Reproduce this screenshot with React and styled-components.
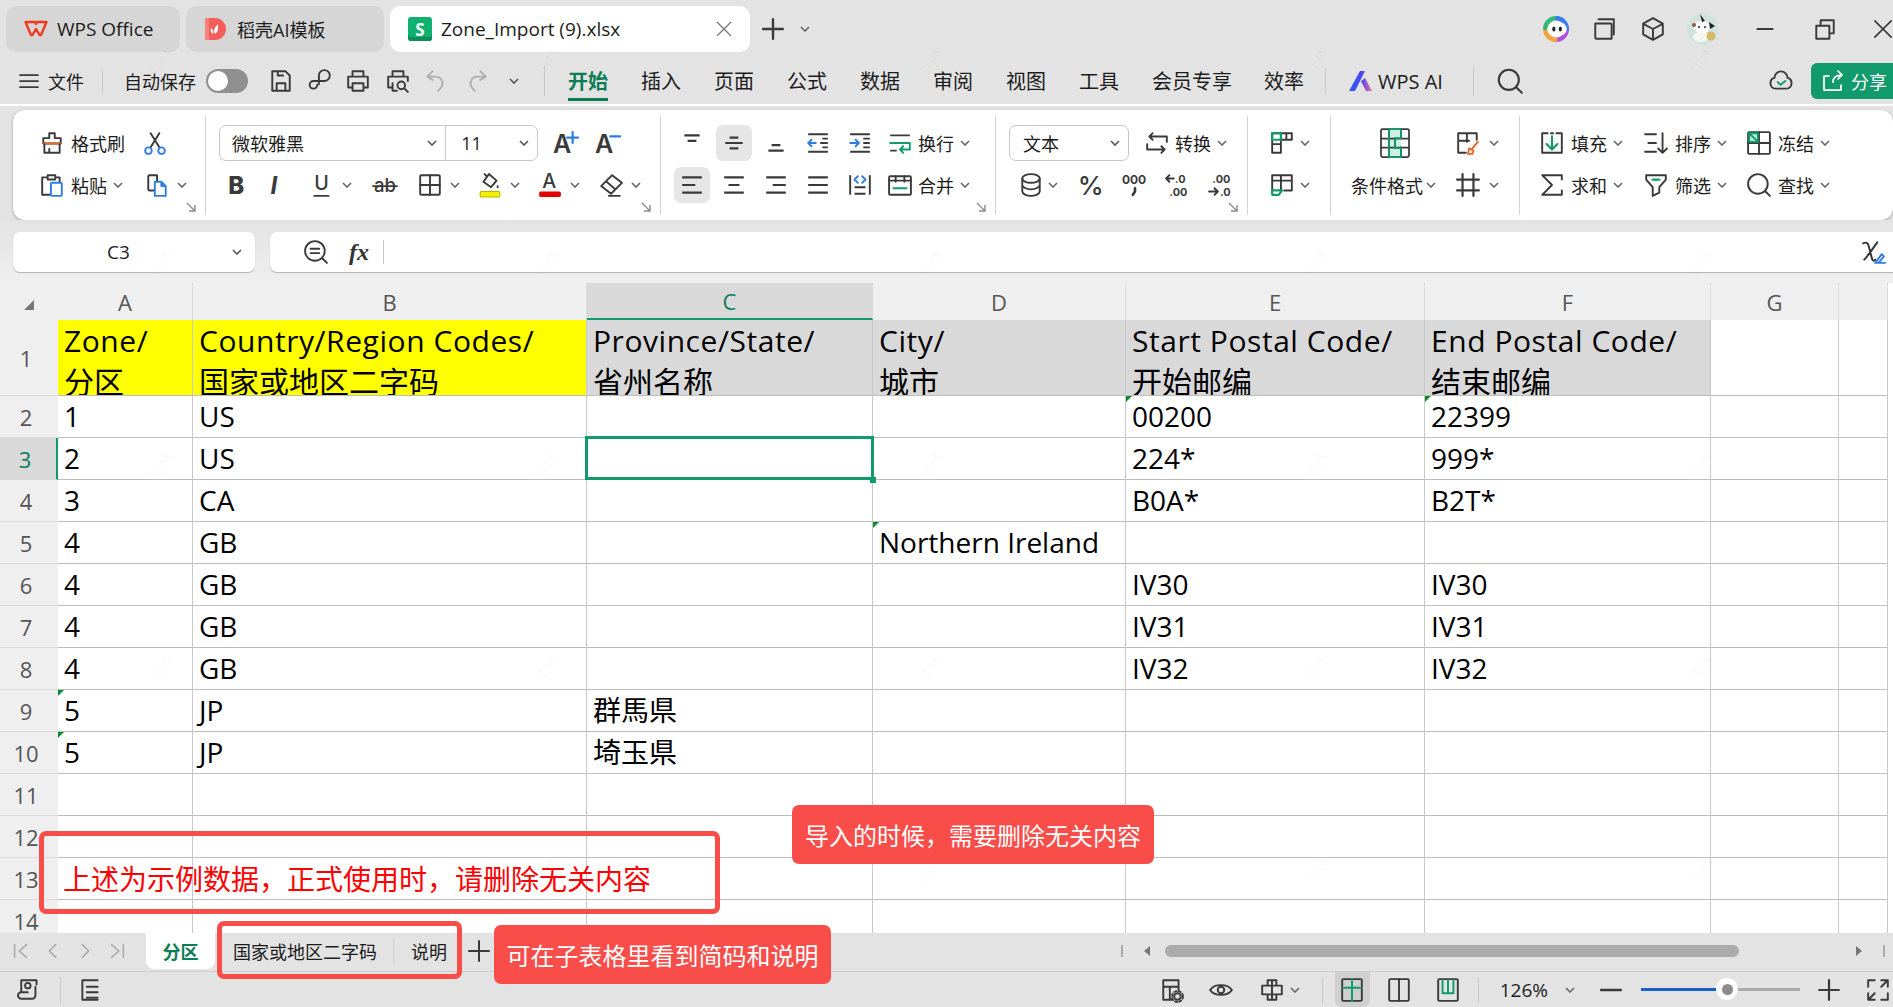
import React from 'react';
import styled, { createGlobalStyle } from 'styled-components';

const INK = '#3a3a3a';
const BLUE = '#2f7de1';
const GREEN = '#119a6c';
const ANNOT = '#f94d4a';

const GlobalStyle = createGlobalStyle`
    html, body { margin: 0; padding: 0; background: #fff; }
    body { font-family: "Open Sans", "Noto Sans CJK SC", sans-serif; color: #1c1c1c; overflow: hidden; }
    * { box-sizing: border-box; }
`;

const Page = styled.div`
    position: relative;
    width: 1893px;
    height: 1007px;
    overflow: hidden;
    display: flex;
    flex-direction: column;
`;

const Svg = styled.svg`
    flex: none;
    width: ${p => p.$size || 24}px;
    height: ${p => p.$size || 24}px;
    margin-left: ${p => p.$ml || 0}px;
    overflow: visible;
    fill: none;
    stroke: ${INK};
    stroke-width: 1.75;
    stroke-linecap: round;
    stroke-linejoin: round;
    text { stroke: none; fill: ${INK}; font-family: "Inter", sans-serif; font-weight: 600; }
`;

const Icon = ({ children, size, ml }) => (
    <Svg viewBox="1 1 22 22" $size={size} $ml={ml}>{children}</Svg>
);

const Chev = styled.svg.attrs({ viewBox: '0 0 10 6', children: <path d="M1 1l4 4 4-4" /> })`
    flex: none;
    width: 10px;
    height: 6px;
    margin-left: ${p => (p.$ml === undefined ? 6 : p.$ml)}px;
    fill: none;
    stroke: ${p => p.$color || '#666'};
    stroke-width: 1.6;
`;

/* ---- title bar ---- */
const TitleBar = styled.div`
    height: 58px;
    background: #e3e3e3;
    padding: 6px 0 6px 6px;
    display: flex;
    align-items: stretch;
    gap: 6px;
`;

const DocTab = styled.div`
    width: ${p => p.$w}px;
    background: ${p => (p.$active ? '#fff' : '#d6d6d6')};
    border-radius: 10px;
    display: flex;
    align-items: center;
    gap: 9px;
    padding: 0 18px;
    font-size: ${p => p.$fs || 19}px;
`;

const TabClose = styled.span`
    margin-left: auto;
    display: flex;
`;

const TitleRight = styled.div`
    margin-left: auto;
    display: flex;
    align-items: center;
`;

const NewTab = styled.div`
    display: flex;
    align-items: center;
    margin-left: 5px;
`;

/* ---- menu bar ---- */
const MenuBar = styled.div`
    height: 46px;
    background: #e3e3e3;
    display: flex;
    align-items: center;
    padding: 0 0 0 18px;
`;

const MenuText = styled.span`
    font-size: ${p => p.$fs || 18}px;
    margin-left: ${p => p.$ml || 0}px;
    white-space: nowrap;
`;

const VSep = styled.span`
    flex: none;
    width: 1px;
    height: ${p => p.$h || 26}px;
    margin-left: ${p => p.$ml || 0}px;
    background: #c8c8c8;
`;

const Toggle = styled.span`
    flex: none;
    width: 42px;
    height: 24px;
    margin-left: 10px;
    border-radius: 12px;
    background: #8f8f8f;
    padding: 2px;
    &::before {
        content: '';
        display: block;
        width: 20px;
        height: 20px;
        border-radius: 50%;
        background: #fff;
    }
`;

const MenuTab = styled.span`
    position: relative;
    flex: none;
    font-size: 20px;
    line-height: 46px;
    padding-top: 1px;
    margin-left: ${p => p.$ml ?? 33}px;
    font-weight: ${p => (p.$active ? 700 : 400)};
    color: ${p => (p.$active ? '#0b7d55' : '#1c1c1c')};
    &::after {
        content: ${p => (p.$active ? "''" : 'none')};
        position: absolute;
        left: 0;
        right: 0;
        bottom: 4px;
        height: 3px;
        background: #0b7d55;
    }
`;

const ShareButton = styled.div`
    width: 82px;
    height: 36px;
    margin-left: 18px;
    border-radius: 6px 0 0 6px;
    background: ${GREEN};
    color: #fff;
    font-size: 18px;
    display: flex;
    align-items: center;
    gap: 7px;
    padding-left: 11px;
    svg { stroke: #fff; }
`;

/* ---- ribbon ---- */
const RibbonWrap = styled.div`
    background: #e3e3e3;
    padding: 4px 0 0 13px;
    height: 114px;
    flex: none;
    margin-top: 2px;
`;

const Ribbon = styled.div`
    height: 110px;
    background: #fff;
    border-radius: 12px;
    box-shadow: 0 1px 3px rgba(0, 0, 0, 0.3);
    padding: 6px 0 5px;
    display: flex;
`;

const Group = styled.div`
    position: relative;
    flex: ${p => (p.$w ? 'none' : 1)};
    width: ${p => p.$w}px;
    border-right: ${p => (p.$w ? '1px solid #d4d4d4' : 'none')};
    padding: 9px 0 0 ${p => p.$pl}px;
    display: flex;
    flex-direction: ${p => p.$dir || 'column'};
    gap: 6px;
`;

const Row = styled.div`
    height: 36px;
    display: flex;
    align-items: center;
    padding-left: ${p => p.$pl || 0}px;
`;

const Tool = styled.div`
    flex: none;
    display: flex;
    align-items: center;
    width: ${p => (p.$w ? `${p.$w}px` : 'auto')};
    font-size: 18px;
    white-space: nowrap;
`;

const Label = styled.span`
    margin-left: ${p => p.$ml ?? 7}px;
`;

const Launcher = styled.svg.attrs({ viewBox: '0 0 10 10', children: <path d="M1 1l7.5 7.5M9 3v6H3" /> })`
    position: absolute;
    right: 9px;
    bottom: 3px;
    width: 10px;
    height: 10px;
    fill: none;
    stroke: #8a8a8a;
    stroke-width: 1.4;
`;

const SelectBox = styled.div`
    flex: none;
    width: ${p => p.$w}px;
    height: 36px;
    border: 1px solid #c6c6c6;
    border-radius: 7px;
    display: flex;
    align-items: center;
    font-size: 18px;
`;

const SelectPart = styled.div`
    display: flex;
    align-items: center;
    height: 100%;
    width: ${p => p.$w}px;
    padding: 0 ${p => p.$pr || 8}px 0 ${p => p.$pl || 12}px;
    border-right: ${p => (p.$split ? '1px solid #c6c6c6' : 'none')};
    justify-content: space-between;
`;

const AlignButton = styled.div`
    flex: none;
    width: 36px;
    height: 36px;
    margin-right: 6px;
    border-radius: 7px;
    background: ${p => (p.$on ? '#e6e6e6' : 'transparent')};
    display: flex;
    align-items: center;
    justify-content: center;
`;

const ColumnTool = styled.div`
    width: 105px;
    display: flex;
    flex-direction: column;
    font-size: 18px;
    white-space: nowrap;
`;

const BigIconSlot = styled.div`
    height: 36px;
    display: flex;
    justify-content: center;
    padding-right: 17px;
    align-items: center;
`;

const LabelRow = styled.div`
    height: 36px;
    margin-top: 6px;
    display: flex;
    align-items: center;
`;

/* ---- formula bar ---- */
const FormulaRow = styled.div`
    flex: none;
    height: 63px;
    padding: 12px 0 11px 13px;
    display: flex;
    gap: 15px;
    background: linear-gradient(#e3e3e3, #efefef);
`;

const NameBox = styled.div`
    width: 242px;
    background: #fff;
    border-radius: 7px;
    box-shadow: 0 1px 1px rgba(0, 0, 0, 0.25);
    display: flex;
    align-items: center;
    font-size: 19px;
    padding-left: 94px;
`;

const FormulaInput = styled.div`
    flex: 1;
    background: #fff;
    border-radius: 7px 0 0 7px;
    box-shadow: 0 1px 1px rgba(0, 0, 0, 0.25);
    display: flex;
    align-items: center;
    padding-left: 34px;
`;

const FxText = styled.span`
    font-family: "Liberation Serif", serif;
    font-style: italic;
    font-weight: 700;
    font-size: 24px;
    margin-left: 21px;
    color: #333;
`;

const FormulaEnd = styled.span`
    margin-left: auto;
    margin-right: 8px;
    display: flex;
`;

/* ---- sheet grid ---- */
const Sheet = styled.div`
    flex: none;
    height: 650px;
    overflow: hidden;
    display: grid;
    width: 1888px;
    grid-template-columns: 58px 135px 394px 286px 253px 299px 286px 128px 49px;
    grid-template-rows: 37px 76px repeat(14, 42px);
`;

const Corner = styled.div`
    background: #efefef;
    display: flex;
    align-items: center;
    justify-content: center;
    padding: 6px 0 0 0;
    &::before {
        content: '';
        border-style: solid;
        border-width: 0 0 10px 10px;
        border-color: transparent transparent #777 transparent;
    }
`;

const ColHead = styled.div`
    background: ${p => (p.$on ? '#d9d9d9' : '#efefef')};
    color: ${p => (p.$on ? '#0b7d55' : '#555')};
    border-right: 1px solid ${p => (p.$on ? '#d9d9d9' : '#dcdcdc')};
    border-bottom: ${p => (p.$on ? `2px solid ${GREEN}` : 'none')};
    display: flex;
    align-items: center;
    justify-content: center;
    font-size: 22px;
`;

const RowHead = styled.div`
    background: ${p => (p.$on ? '#d9d9d9' : '#efefef')};
    color: ${p => (p.$on ? '#0b7d55' : '#555')};
    border-bottom: 1px solid ${p => (p.$on ? '#d9d9d9' : '#dcdcdc')};
    border-right: ${p => (p.$on ? `2px solid ${GREEN}` : 'none')};
    display: flex;
    align-items: center;
    justify-content: center;
    padding-right: 6px;
    font-size: 22px;
`;

const Cell = styled.div`
    position: relative;
    background: ${p => p.$bg || '#fff'};
    border-right: 1px solid #c8c8c8;
    border-bottom: 1px solid #bdbdbd;
    padding-left: 6px;
    font-size: ${p => (p.$head ? 30 : 28)}px;
    line-height: 41px;
    color: #000;
    white-space: pre;
    overflow: ${p => (p.$sel ? 'visible' : 'hidden')};
    &::before {
        content: ${p => (p.$flag ? "''" : 'none')};
        position: absolute;
        left: 0;
        top: 0;
        border-style: solid;
        border-width: 6px 6px 0 0;
        border-color: #0b8a2e transparent transparent transparent;
    }
    &::after {
        content: ${p => (p.$sel ? "''" : 'none')};
        position: absolute;
        inset: -2px -2px -1px -2px;
        border: 3px solid ${GREEN};
        z-index: 2;
    }
`;

const HeadLatin = styled.span`
    letter-spacing: 0.55px;
`;

const FillHandle = styled.span`
    position: absolute;
    right: -4px;
    bottom: -4px;
    width: 6px;
    height: 6px;
    background: ${GREEN};
    z-index: 3;
`;

/* ---- sheet tabs ---- */
const SheetBar = styled.div`
    flex: none;
    height: 38px;
    background: #e3e3e3;
    display: flex;
    align-items: flex-start;
    padding-left: 11px;
`;

const NavSlot = styled.div`
    width: 32px;
    height: 36px;
    display: flex;
    align-items: center;
`;

const ActiveSheet = styled.div`
    width: 69px;
    height: 36px;
    margin-left: 7px;
    background: #fff;
    border-radius: 0 0 8px 8px;
    color: #0b7d55;
    font-weight: 700;
    font-size: 18px;
    display: flex;
    align-items: center;
    justify-content: center;
`;

const SheetName = styled.div`
    height: 36px;
    font-size: 18px;
    margin-left: ${p => p.$ml}px;
    display: flex;
    align-items: center;
`;

const SheetSep = styled.span`
    width: 1px;
    height: 26px;
    margin: 5px 0 0 16px;
    background: #cfcfcf;
`;

const HScroll = styled.div`
    margin-left: auto;
    width: 772px;
    height: 36px;
    padding-right: 8px;
    display: flex;
    align-items: center;
`;

const ScrollTick = styled.span`
    width: 2px;
    height: 12px;
    background: #aaa;
`;

const ScrollThumb = styled.span`
    width: 574px;
    height: 12px;
    margin-left: 15px;
    border-radius: 6px;
    background: #ababab;
`;

const ScrollArrow = styled.span`
    margin: ${p => p.$m};
    border-style: solid;
    border-width: 5px ${p => (p.$right ? 0 : '6px')} 5px ${p => (p.$right ? '6px' : 0)};
    border-color: transparent ${p => (p.$right ? 'transparent' : '#777')} transparent ${p => (p.$right ? '#777' : 'transparent')};
`;

/* ---- status bar ---- */
const StatusBar = styled.div`
    flex: none;
    height: 36px;
    background: #e3e3e3;
    border-top: 1px solid #cdcdcd;
    display: flex;
    align-items: center;
    padding: 0 3px 0 18px;
`;

const StatusRight = styled.div`
    margin-left: auto;
    display: flex;
    align-items: center;
    height: 100%;
`;

const ViewButton = styled.div`
    flex: none;
    width: 35px;
    height: 100%;
    margin-left: ${p => p.$ml || 0}px;
    border-radius: 0 0 7px 7px;
    background: ${p => (p.$on ? '#cfcfcf' : 'transparent')};
    display: flex;
    align-items: center;
    justify-content: center;
`;

const ZoomSlider = styled.div`
    position: relative;
    flex: none;
    width: 159px;
    height: 3px;
    margin-left: 18px;
    background: #aaa;
`;

const ZoomFill = styled.div`
    height: 100%;
    background: #1a5fc4;
`;

const ZoomKnob = styled.span`
    position: absolute;
    left: 75px;
    top: -10px;
    width: 22px;
    height: 22px;
    border-radius: 50%;
    background: #fff;
    display: flex;
    align-items: center;
    justify-content: center;
    &::before {
        content: '';
        width: 11px;
        height: 11px;
        border-radius: 50%;
        background: #8c8c8c;
    }
`;

/* ---- red annotations over the sheet ---- */
const AnnotBox = styled.div`
    position: absolute;
    left: ${p => p.$x}px;
    top: ${p => p.$y}px;
    width: ${p => p.$w}px;
    height: ${p => p.$h}px;
    border: 5px solid ${ANNOT};
    border-radius: 7px;
    z-index: 5;
`;

const AnnotText = styled.span`
    position: absolute;
    left: 19px;
    top: 22px;
    font-family: "Noto Sans CJK SC", sans-serif;
    font-size: 28px;
    line-height: 40px;
    color: #ff0000;
    white-space: nowrap;
`;

const AnnotTag = styled.div`
    position: absolute;
    left: ${p => p.$x}px;
    top: ${p => p.$y}px;
    width: ${p => p.$w}px;
    height: 59px;
    border-radius: 7px;
    background: ${ANNOT};
    color: #fff;
    font-family: "Noto Sans CJK SC", sans-serif;
    font-size: 24px;
    display: flex;
    align-items: center;
    justify-content: center;
    white-space: nowrap;
    z-index: 5;
`;

const Watermarks = styled.div`
    position: absolute;
    inset: 0;
    pointer-events: none;
    display: grid;
    grid-template-columns: repeat(5, 385px);
    grid-auto-rows: 202.5px;
    padding: 40px 0 0 150px;
    z-index: 4;
`;

const Watermark = styled.span`
    width: 44px;
    height: 40px;
    font-size: 15px;
    color: rgba(0, 0, 0, 0.03);
    transform: rotate(-58deg);
`;

/* ---- drawings ---- */
const alignLines = {
    top: 'M5 5h14M8 10h8',
    middle: 'M8 7h8M4 12h16M8 17h8',
    bottom: 'M8 14h8M5 19h14',
};

const TabS = styled.span`
    width: 24px;
    height: 24px;
    border-radius: 3px;
    background: #0fb170;
    color: #fff;
    font-weight: 700;
    font-size: 17px;
    display: flex;
    align-items: center;
    justify-content: center;
    box-shadow: inset 0 -4px 0 #0a8f58;
`;

const Lines = ({ d }) => <Icon><path d={d} strokeWidth="2" strokeLinecap="butt" /></Icon>;

const ToolChev = ({ w, children, ml }) => (
    <Tool $w={w}>{children}<Chev $ml={ml === undefined ? 8 : ml} /></Tool>
);

const cols = ['A', 'B', 'C', 'D', 'E', 'F', 'G', ''];

const rows = [
    { n: 2, a: '1', b: 'US', e: '00200', f: '22399', flags: 'ef' },
    { n: 3, a: '2', b: 'US', e: '224*', f: '999*', on: true },
    { n: 4, a: '3', b: 'CA', e: 'B0A*', f: 'B2T*' },
    { n: 5, a: '4', b: 'GB', d: 'Northern Ireland', flags: 'd' },
    { n: 6, a: '4', b: 'GB', e: 'IV30', f: 'IV30' },
    { n: 7, a: '4', b: 'GB', e: 'IV31', f: 'IV31' },
    { n: 8, a: '4', b: 'GB', e: 'IV32', f: 'IV32' },
    { n: 9, a: '5', b: 'JP', c: '群馬県', flags: 'a' },
    { n: 10, a: '5', b: 'JP', c: '埼玉県', flags: 'a' },
    { n: 11 }, { n: 12 }, { n: 13 }, { n: 14 },
];

const headRow = [
    ['Zone/', '分区', '#ffff00'],
    ['Country/Region Codes/', '国家或地区二字码', '#ffff00'],
    ['Province/State/', '省州名称', '#d9d9d9'],
    ['City/', '城市', '#d9d9d9'],
    ['Start Postal Code/', '开始邮编', '#d9d9d9'],
    ['End Postal Code/', '结束邮编', '#d9d9d9'],
    ['', '', '#fff'],
    ['', '', '#fff'],
];

function App() {
    return (
        <Page>
            <GlobalStyle />
            <TitleBar>
                <DocTab $w={174}>
                    <Svg viewBox="0 0 24 24">
                        <path d="M1.500 5H11l1 2 1-2h9.500L17 18h-1.500L12 12l-3.500 6H7z" stroke="#f4381f" strokeWidth="2.400" />
                    </Svg>
                    WPS Office
                </DocTab>
                <DocTab $w={198} $fs={18}>
                    <Svg viewBox="0 0 24 24" style={{ stroke: 'none' }}>
                        <path d="M1 1h10a11 11 0 0 1 0 22H1z" fill="#f55d5a" />
                        <path d="M1 1h4v22H1z" fill="#f7827e" />
                        <path d="M11 17c-2-3-1-6 3-10 0 4 1 7-3 10zM9 17c-2-1-3-3-2-6 2 2 3 3 2 6z" fill="#fff" />
                    </Svg>
                    稻壳AI模板
                </DocTab>
                <DocTab $w={360} $active>
                    <TabS>S</TabS>
                    Zone_Import (9).xlsx
                    <TabClose>
                        <Icon size={16}><path d="M3 3l18 18M21 3L3 21" stroke="#777" /></Icon>
                    </TabClose>
                </DocTab>
                <NewTab>
                    <Icon><path d="M12 3v18M3 12h18" strokeWidth="2.200" /></Icon>
                    <Chev $ml={15} />
                </NewTab>
                <TitleRight>
                    <Svg viewBox="0 0 24 24" $size={26}>
                        <circle cx="12" cy="12" r="10" strokeWidth="4" stroke="#b04ae0" strokeDasharray="16 50" />
                        <circle cx="12" cy="12" r="10" strokeWidth="4" stroke="#f2a33a" strokeDasharray="16 50" strokeDashoffset="-16" />
                        <circle cx="12" cy="12" r="10" strokeWidth="4" stroke="#33b87a" strokeDasharray="16 50" strokeDashoffset="-32" />
                        <circle cx="12" cy="12" r="10" strokeWidth="4" stroke="#3a7df0" strokeDasharray="16 50" strokeDashoffset="-48" />
                        <ellipse cx="13" cy="12" rx="9" ry="7" fill="#fff" stroke="none" />
                        <ellipse cx="10" cy="12" rx="1.500" ry="2.400" fill="#222" stroke="none" />
                        <ellipse cx="16" cy="12" rx="1.500" ry="2.400" fill="#222" stroke="none" />
                    </Svg>
                    <Icon ml={23}><path d="M4 7h14a1 1 0 0 1 1 1v13H5a1 1 0 0 1-1-1zM7 3h14v14" /></Icon>
                    <Icon ml={25}><path d="M12 2l9 5v10l-9 5-9-5V7zM3.500 7.500L12 12l8.500-4.500M12 12v9.500" /></Icon>
                    <Svg viewBox="0 0 32 32" $size={32} $ml={22} style={{ stroke: 'none' }}>
                        <circle cx="16" cy="16" r="15.500" fill="#cfe4dc" />
                        <ellipse cx="15" cy="14" rx="8" ry="6.500" fill="#fff" />
                        <path d="M13 1l5 7-3 1zM22 9l6 4-5 3z" fill="#222" />
                        <ellipse cx="14" cy="24" rx="8" ry="5" fill="#f7f7f2" />
                        <circle cx="24" cy="23" r="4.500" fill="#d9b765" />
                        <circle cx="7" cy="12" r="2" fill="#8a5a3c" />
                        <circle cx="12" cy="14" r="1" fill="#222" />
                        <circle cx="18" cy="14" r="1" fill="#222" />
                    </Svg>
                    <Icon ml={34}><path d="M5 12h14" /></Icon>
                    <Icon ml={36}><path d="M4 9h12v12H4zM8 9V4h12v12h-4" /></Icon>
                    <Icon ml={36} size={20}><path d="M3 3l18 18M21 3L3 21" /></Icon>
                </TitleRight>
            </TitleBar>

            <MenuBar>
                <Svg viewBox="0 0 24 24" $size={24} style={{ marginLeft: -1 }}><path d="M3 6h18M3 12h18M3 18h18" /></Svg>
                <MenuText $ml={7}>文件</MenuText>
                <VSep $ml={18} />
                <MenuText $ml={21}>自动保存</MenuText>
                <Toggle />
                <Icon ml={21}><path d="M4 3h12l4 4v14H4zM8 21v-7h8v7M9 3v4h5" /></Icon>
                <Icon ml={15}><path d="M11 15V7a5 5 0 1 1 5 5H6a3.500 3.500 0 1 0 3.500 3.500" /></Icon>
                <Icon ml={14}><path d="M7 8V3h10v5M7 18H3V8h18v10h-4M7 14h10v7H7z" /></Icon>
                <Icon ml={16}><path d="M7 8V3h10v5M7 18H3V8h18v4M7 14v7h4" /><circle cx="15" cy="16" r="3.500" /><path d="M18 19l3 3" /></Icon>
                <Icon ml={14}><path d="M9 3L4 8l5 3M4 8h8a6 6 0 0 1 6 6c0 3-2 5-4 7" stroke="#aeaeae" /></Icon>
                <Icon ml={17}><path d="M15 3l5 5-5 3M20 8h-8a6 6 0 0 0-6 6c0 3 2 5 4 7" stroke="#aeaeae" /></Icon>
                <Chev $ml={20} $color="#555" />
                <VSep $ml={25} $h={30} />
                <MenuTab $active $ml={23}>开始</MenuTab>
                <MenuTab>插入</MenuTab>
                <MenuTab>页面</MenuTab>
                <MenuTab>公式</MenuTab>
                <MenuTab>数据</MenuTab>
                <MenuTab>审阅</MenuTab>
                <MenuTab>视图</MenuTab>
                <MenuTab>工具</MenuTab>
                <MenuTab>会员专享</MenuTab>
                <MenuTab $ml={32}>效率</MenuTab>
                <VSep $ml={21} $h={26} />
                <Svg viewBox="0 0 24 24" $ml={23} style={{ stroke: 'none' }}>
                    <defs>
                        <linearGradient id="wpsai" x1="0" x2="1">
                            <stop offset="0" stopColor="#2a5cf6" />
                            <stop offset="0.55" stopColor="#4a46f0" />
                            <stop offset="1" stopColor="#f46b9e" />
                        </linearGradient>
                    </defs>
                    <path d="M0 22L11 2h5L6 22zM12 12l4-3 7 13h-6z" fill="url(#wpsai)" />
                </Svg>
                <MenuText $fs={20} $ml={5}>WPS AI</MenuText>
                <VSep $ml={30} $h={30} />
                <Icon ml={23} size={26}><circle cx="11" cy="11" r="8.500" /><path d="M17 17l5 5" /></Icon>
                <TitleRight>
                    <Icon><path d="M7 19a5 5 0 0 1-1-9.800 6 6 0 0 1 12 0A5 5 0 0 1 17 19z" /><path d="M9 13l2.500 2.500L16 12" stroke={GREEN} /></Icon>
                    <ShareButton>
                        <Icon size={22}><path d="M8 7H3v14h17v-5M12 13c0-5 3-7 9-7M17 2l4 4-4 4" /></Icon>
                        分享
                    </ShareButton>
                </TitleRight>
            </MenuBar>

            <RibbonWrap>
                <Ribbon>
                    <Group $w={193} $pl={27}>
                        <Row>
                            <Tool $w={103}>
                                <Icon>
                                    <path d="M9.500 3h5v4.500H20v5H4v-5h5.500z" />
                                    <path d="M4.500 12.500h15" stroke="#e8692a" />
                                    <path d="M5 13v8h4.500v-3.500M9.500 21H19v-8" />
                                </Icon>
                                <Label>格式刷</Label>
                            </Tool>
                            <Icon>
                                <path d="M8 16L16 3M16 16L8 3" />
                                <circle cx="6" cy="19" r="3" stroke={BLUE} />
                                <circle cx="18" cy="19" r="3" stroke={BLUE} />
                            </Icon>
                        </Row>
                        <Row>
                            <Tool $w={105}>
                                <Icon>
                                    <path d="M8 5H3v16h7M8 3h7v4H8zM15 5h4v4" />
                                    <rect x="11" y="10" width="10" height="12" rx="1" stroke={BLUE} />
                                </Icon>
                                <Label>粘贴</Label>
                                <Chev />
                            </Tool>
                            <ToolChev>
                                <Icon>
                                    <path d="M9 17H5a1 1 0 0 1-1-1V4a1 1 0 0 1 1-1h7v5" />
                                    <path d="M10 9h6l4 4v9H10zM16 9v4h4" stroke={BLUE} />
                                </Icon>
                            </ToolChev>
                        </Row>
                        <Launcher />
                    </Group>

                    <Group $w={455} $pl={13}>
                        <Row>
                            <SelectBox $w={319}>
                                <SelectPart $w={227} $split>微软雅黑<Chev $color="#555" /></SelectPart>
                                <SelectPart $w={91} $pl={15}>11<Chev $color="#555" /></SelectPart>
                            </SelectBox>
                            <Tool $w={42} style={{ marginLeft: 15 }}>
                                <Icon>
                                    <text x="1" y="21" fontSize="23">A</text>
                                    <path d="M19 2v10M14 7h10" stroke={BLUE} strokeWidth="2" />
                                </Icon>
                            </Tool>
                            <Tool>
                                <Icon>
                                    <text x="1" y="21" fontSize="23">A</text>
                                    <path d="M15 6h9" stroke={BLUE} strokeWidth="2" />
                                </Icon>
                            </Tool>
                        </Row>
                        <Row $pl={6}>
                            <Tool $w={40}><Icon><text x="4" y="20" fontSize="22" style={{ fontWeight: 800 }}>B</text></Icon></Tool>
                            <Tool $w={45}><Icon><text x="6" y="20" fontSize="22" fontFamily="Liberation Serif" fontStyle="italic" style={{ fontWeight: 700 }}>I</text></Icon></Tool>
                            <ToolChev w={63}><Icon><text x="5" y="17" fontSize="18" style={{ fontWeight: 500 }}>U</text><path d="M5 22h13" /></Icon></ToolChev>
                            <Tool $w={45}><Icon><text x="2" y="18" fontSize="17" style={{ fontWeight: 500 }}>ab</text><path d="M1 13h22" /></Icon></Tool>
                            <ToolChev w={60}><Icon><rect x="3" y="3" width="18" height="18" rx="1" /><path d="M12 3v18M3 12h18" /></Icon></ToolChev>
                            <ToolChev w={60}>
                                <Icon>
                                    <path d="M11 2l7 6-5 6-7-5zM9 4l-2-2M19 13v1" />
                                    <rect x="3" y="18" width="18" height="5" rx="1" fill="#f5f000" stroke="#b9b500" strokeWidth="1" />
                                </Icon>
                            </ToolChev>
                            <ToolChev w={61}>
                                <Icon>
                                    <text x="5" y="15" fontSize="18" style={{ fontWeight: 500 }}>A</text>
                                    <rect x="2" y="18" width="20" height="5" rx="1.500" fill="#e60000" stroke="none" />
                                </Icon>
                            </ToolChev>
                            <ToolChev>
                                <Icon><path d="M3 13L13 3l9 7-10 10zM8 9l8 7M10 22h10" /></Icon>
                            </ToolChev>
                        </Row>
                        <Launcher />
                    </Group>

                    <Group $w={335} $pl={13}>
                        <Row>
                            <AlignButton><Lines d={alignLines.top} /></AlignButton>
                            <AlignButton $on><Lines d={alignLines.middle} /></AlignButton>
                            <AlignButton><Lines d={alignLines.bottom} /></AlignButton>
                            <AlignButton>
                                <Icon><path d="M3 4h18M3 20h18M14 12h7M16 8h5M16 16h5" strokeLinecap="butt" /><path d="M10 12H3M6 9l-3 3 3 3" stroke={BLUE} /></Icon>
                            </AlignButton>
                            <AlignButton>
                                <Icon><path d="M3 4h18M3 20h18M15 12h6M15 8h6M15 16h6" strokeLinecap="butt" /><path d="M3 12h8M8 9l3 3-3 3" stroke={BLUE} /></Icon>
                            </AlignButton>
                            <Tool style={{ marginLeft: 4 }}>
                                <Icon><path d="M3 5h18M3 19h6" strokeLinecap="butt" /><path d="M3 12h18v6h-9M15 15l-3 3 3 3" stroke={GREEN} /></Icon>
                                <Label $ml={6}>换行</Label>
                                <Chev />
                            </Tool>
                        </Row>
                        <Row>
                            <AlignButton $on><Lines d="M3 5h18M3 12h12M3 19h18" /></AlignButton>
                            <AlignButton><Lines d="M3 5h18M7 12h10M3 19h18" /></AlignButton>
                            <AlignButton><Lines d="M3 5h18M9 12h12M3 19h18" /></AlignButton>
                            <AlignButton><Lines d="M3 5h18M3 12h18M3 19h18" /></AlignButton>
                            <AlignButton>
                                <Icon><path d="M3 3v18M21 3v18M7 14h10M7 20h10" strokeLinecap="butt" /><path d="M10 4L7 7l3 3M14 4l3 3-3 3" stroke={BLUE} /></Icon>
                            </AlignButton>
                            <Tool style={{ marginLeft: 4 }}>
                                <Icon><rect x="2" y="4" width="20" height="17" rx="1" /><path d="M2 8h20M8 4v5M16 4v5" /><path d="M6 15h12" stroke={GREEN} /></Icon>
                                <Label $ml={6}>合并</Label>
                                <Chev />
                            </Tool>
                        </Row>
                        <Launcher />
                    </Group>

                    <Group $w={252} $pl={13}>
                        <Row>
                            <SelectBox $w={120}>
                                <SelectPart $w={118} $pl={13}>文本<Chev $color="#555" /></SelectPart>
                            </SelectBox>
                            <Tool style={{ marginLeft: 16 }}>
                                <Icon><path d="M8 3L5 6l3 3M5 6h16v5M16 21l3-3-3-3M19 18H3v-5" /></Icon>
                                <Label $ml={6}>转换</Label>
                                <Chev />
                            </Tool>
                        </Row>
                        <Row $pl={10}>
                            <Tool $w={62}>
                                <Icon><ellipse cx="12" cy="6" rx="8" ry="4" /><path d="M4 6v12c0 2 4 4 8 4s8-2 8-4V6M4 12c0 2 4 4 8 4s8-2 8-4" /></Icon>
                                <Chev $ml={5} />
                            </Tool>
                            <Tool $w={42}><Icon><text x="-2" y="21" fontSize="24" style={{ fontWeight: 500 }}>%</text></Icon></Tool>
                            <Tool $w={42}><Icon><text x="0" y="11" fontSize="11" style={{ fontWeight: 700 }}>000</text><path d="M12 15v3l-2 3" strokeWidth="2.400" /></Icon></Tool>
                            <Tool $w={43}><Icon><text x="10" y="10" fontSize="10" style={{ fontWeight: 700 }}>.0</text><text x="5" y="22" fontSize="10" style={{ fontWeight: 700 }}>.00</text><path d="M9 6H2M5 3L2 6l3 3" /></Icon></Tool>
                            <Tool><Icon><text x="5" y="10" fontSize="10" style={{ fontWeight: 700 }}>.00</text><text x="12" y="22" fontSize="10" style={{ fontWeight: 700 }}>.0</text><path d="M2 18h8M7 15l3 3-3 3" /></Icon></Tool>
                        </Row>
                        <Launcher />
                    </Group>

                    <Group $w={83} $pl={22}>
                        <Row>
                            <ToolChev ml={6}>
                                <Icon><path d="M3 13h8V3H3zM11 9h10V3H11M3 13v8h8v-8M16 3v6" /><path d="M3 9V3h8v6H3" stroke={GREEN} strokeWidth="2" /></Icon>
                            </ToolChev>
                        </Row>
                        <Row>
                            <ToolChev ml={6}>
                                <Icon><path d="M3 17V3h18v14H14M3 8h18M11 3v14" /><path d="M3 17h9l-3 4H3z" stroke={GREEN} strokeWidth="2" /></Icon>
                            </ToolChev>
                        </Row>
                    </Group>

                    <Group $w={189} $pl={20} $dir="row" style={{ gap: 0 }}>
                        <ColumnTool>
                            <BigIconSlot>
                                <Svg viewBox="0 0 30 30" $size={30}>
                                    <rect x="9" y="1" width="12" height="28" fill="#cdf1e0" stroke="none" />
                                    <rect x="1" y="1" width="28" height="28" rx="1.500" />
                                    <path d="M1 10.500h28M1 19.500h28M9 1v28M21 1v9M15 10v9M21 19v10" />
                                    <path d="M9 1h12v9h-6v10h6v9H9z" stroke={GREEN} />
                                </Svg>
                            </BigIconSlot>
                            <LabelRow>条件格式<Chev $ml={3} /></LabelRow>
                        </ColumnTool>
                        <div>
                            <Row style={{ marginBottom: 6 }}>
                                <ToolChev ml={9}>
                                    <Icon><path d="M10 21H3V3h17v6M3 10h10M11 3v8" /><path d="M21 11l-6 7M12 22l1-5 4 2-1 3z" stroke="#e8692a" /></Icon>
                                </ToolChev>
                            </Row>
                            <Row>
                                <ToolChev ml={9}>
                                    <Icon><path d="M7 2v20M17 2v20M2 7h20M2 17h20" strokeWidth="2" /></Icon>
                                </ToolChev>
                            </Row>
                        </div>
                    </Group>

                    <Group $pl={20}>
                        <Row>
                            <Tool $w={104}>
                                <Icon><path d="M8 3H3v18h18V3h-5M11 3h2" /><path d="M12 6v12M7 13l5 5 5-5" stroke={GREEN} strokeWidth="2" /></Icon>
                                <Label>填充</Label><Chev />
                            </Tool>
                            <Tool $w={103}>
                                <Icon><path d="M2 4h10M5 12h7M2 20h10M18 3v18M14 17l4 4 4-4" /></Icon>
                                <Label>排序</Label><Chev />
                            </Tool>
                            <Tool>
                                <Icon><rect x="2" y="2" width="20" height="20" rx="1" /><path d="M12 2v20M2 12h20" /><path d="M3 3h8v8H3zM3 3l8 8" stroke={GREEN} fill="#bfe8d6" /></Icon>
                                <Label>冻结</Label><Chev />
                            </Tool>
                        </Row>
                        <Row>
                            <Tool $w={104}>
                                <Icon><path d="M21 7V3H3l9 9-9 9h18v-4" /></Icon>
                                <Label>求和</Label><Chev />
                            </Tool>
                            <Tool $w={103}>
                                <Icon><path d="M3 3h18v4l-6 7v5l-6 3v-8L3 7z" /><path d="M9 7h6" stroke={GREEN} strokeWidth="2" /></Icon>
                                <Label>筛选</Label><Chev />
                            </Tool>
                            <Tool>
                                <Icon><circle cx="11" cy="11" r="9" /><path d="M18 18l4 4" /></Icon>
                                <Label>查找</Label><Chev />
                            </Tool>
                        </Row>
                    </Group>
                </Ribbon>
            </RibbonWrap>

            <FormulaRow>
                <NameBox>C3<Chev $ml={102} $color="#555" /></NameBox>
                <FormulaInput>
                    <Icon>
                        <circle cx="11" cy="11" r="9" />
                        <path d="M7 9h8M7 13h8M18 18l4 4" />
                    </Icon>
                    <FxText>fx</FxText>
                    <VSep $ml={14} $h={24} />
                    <FormulaEnd>
                        <Icon>
                            <path d="M3 4c4-2 5 1 6 6l2 8c.5 2 2 3 3 1M16 3c-3 4-8 12-12 16" stroke="#333" />
                            <path d="M14 22l6-8 2 2-5 6zM14 22h9" stroke={BLUE} />
                        </Icon>
                    </FormulaEnd>
                </FormulaInput>
            </FormulaRow>

            <Sheet>
                <Corner />
                {cols.map((c, i) => <ColHead key={i} $on={c === 'C'}>{c}</ColHead>)}
                <RowHead>1</RowHead>
                {headRow.map(([latin, cjk, bg], i) => (
                    <Cell key={i} $head $bg={bg}>
                        <HeadLatin>{latin}</HeadLatin>
                        {latin && '\n'}
                        {cjk}
                    </Cell>
                ))}
                {rows.map(r => (
                    <React.Fragment key={r.n}>
                        <RowHead $on={r.on}>{r.n}</RowHead>
                        {['a', 'b', 'c', 'd', 'e', 'f', 'g', 'h'].map(k => (
                            <Cell
                                key={k}
                                $flag={r.flags && r.flags.includes(k)}
                                $sel={r.on && k === 'c'}
                            >
                                {r[k]}
                                {r.on && k === 'c' && <FillHandle />}
                            </Cell>
                        ))}
                    </React.Fragment>
                ))}
            </Sheet>

            <SheetBar>
                <NavSlot><Icon size={20}><path d="M5 5v14M18 5l-8 7 8 7" stroke="#aaa" /></Icon></NavSlot>
                <NavSlot><Icon size={20}><path d="M15 5l-7 7 7 7" stroke="#aaa" /></Icon></NavSlot>
                <NavSlot><Icon size={20}><path d="M9 5l7 7-7 7" stroke="#aaa" /></Icon></NavSlot>
                <NavSlot><Icon size={20}><path d="M6 5l8 7-8 7M19 5v14" stroke="#aaa" /></Icon></NavSlot>
                <ActiveSheet>分区</ActiveSheet>
                <SheetName $ml={18}>国家或地区二字码</SheetName>
                <SheetSep />
                <SheetName $ml={17}>说明</SheetName>
                <SheetName $ml={21}><Icon size={22}><path d="M12 2v20M2 12h20" strokeWidth="2" /></Icon></SheetName>
                <HScroll>
                    <ScrollTick />
                    <ScrollArrow $m="0 0 0 21px" />
                    <ScrollThumb />
                    <ScrollArrow $right $m="0 0 0 auto" />
                    <ScrollTick style={{ marginLeft: 21 }} />
                </HScroll>
            </SheetBar>

            <StatusBar>
                <Icon><path d="M4 3h14v4M4 3v11h6M4 14a3 3 0 0 0 0 6h10a3 3 0 0 0 3-3V9" /><circle cx="10" cy="8" r="2.500" /></Icon>
                <VSep $ml={18} $h={26} />
                <Icon ml={17}><path d="M19 3H5v18h14M9 9h10M9 14h10M9 19h10" /></Icon>
                <StatusRight>
                    <Icon><path d="M18 12V3H4v18h8M4 9h14M10 9v12" /><circle cx="17" cy="18" r="3" /><circle cx="17" cy="18" r="5" strokeDasharray="2 2" /></Icon>
                    <Icon ml={25}><path d="M2 12c4-6 16-6 20 0-4 6-16 6-20 0z" /><circle cx="12" cy="12" r="3" /></Icon>
                    <Icon ml={27}><path d="M8 8h8V3H8zM3 8h18v8H3zM8 16h8v5H8zM12 3v18" /></Icon>
                    <Chev $ml={6} />
                    <VSep $ml={22} $h={26} />
                    <ViewButton $ml={12} $on>
                        <Icon><rect x="3" y="2" width="18" height="20" rx="1" /><path d="M12 2v20M3 10h18" stroke={GREEN} /></Icon>
                    </ViewButton>
                    <ViewButton $ml={12}><Icon><rect x="3" y="2" width="18" height="20" rx="1" /><path d="M12 2v20" /></Icon></ViewButton>
                    <ViewButton $ml={14}>
                        <Icon><rect x="3" y="2" width="18" height="20" rx="1" /><path d="M7 3v12h10V3M12 3v12" stroke={GREEN} /></Icon>
                    </ViewButton>
                    <VSep $ml={12} $h={26} />
                    <MenuText $ml={21} $fs={19}>126%</MenuText>
                    <Chev $ml={17} />
                    <Icon ml={24}><path d="M3 12h18" strokeWidth="2.400" /></Icon>
                    <ZoomSlider>
                        <ZoomFill style={{ width: `${(76 / 159) * 100}%` }} />
                        <ZoomKnob />
                    </ZoomSlider>
                    <Icon ml={17}><path d="M12 3v18M3 12h18" strokeWidth="2" /></Icon>
                    <Icon ml={25}><path d="M3 9V3h6M15 3h6v6M21 15v6h-6M9 21H3v-6M9 15l-5 5M15 9l5-5" /></Icon>
                </StatusRight>
            </StatusBar>

            <AnnotBox $x={39} $y={831} $w={681} $h={83}>
                <AnnotText>上述为示例数据，正式使用时，请删除无关内容</AnnotText>
            </AnnotBox>
            <AnnotBox $x={217} $y={921} $w={245} $h={58} />
            <AnnotTag $x={792} $y={805} $w={362}>导入的时候，需要删除无关内容</AnnotTag>
            <AnnotTag $x={494} $y={925} $w={337}>可在子表格里看到简码和说明</AnnotTag>

            <Watermarks>
                {Array.from({ length: 25 }, (_, i) => <Watermark key={i}>桂林</Watermark>)}
            </Watermarks>
        </Page>
    );
}

export default App;
